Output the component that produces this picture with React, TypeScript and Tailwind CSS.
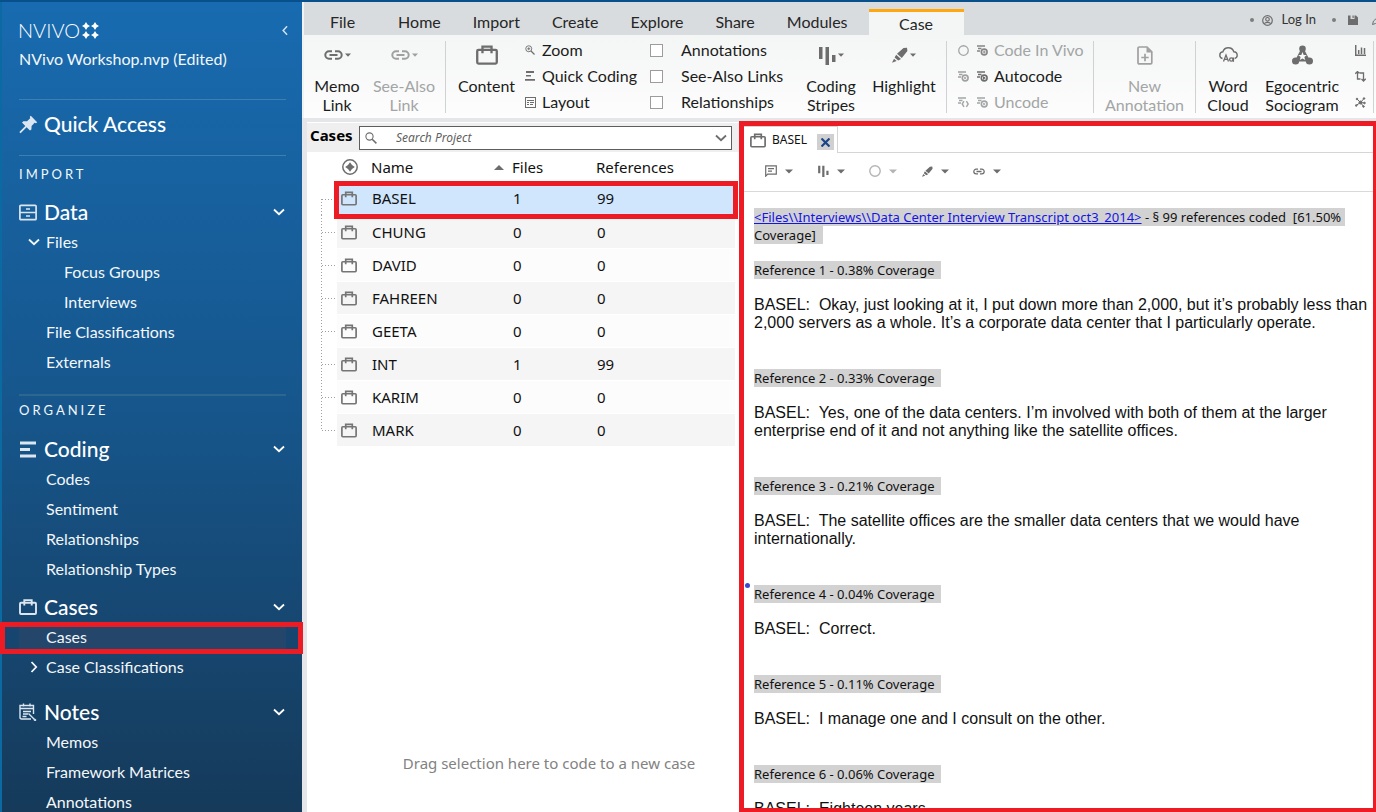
import React from "react";

type IconProps = { className?: string };

const Chevron = ({ className = "" }: IconProps) => (
  <svg width="12" height="8" viewBox="0 0 12 8" fill="none" stroke="currentColor" strokeWidth="1.8" className={className}>
    <path d="M1 1.5 6 6.2 11 1.5" />
  </svg>
);

const Caret = ({ className = "" }: IconProps) => (
  <svg width="8" height="5" viewBox="0 0 8 5" fill="currentColor" className={className}>
    <path d="M0 0.5h8L4 4.5z" />
  </svg>
);

const SmallCaret = () => (
  <svg width="6" height="4" viewBox="0 0 6 4" fill="currentColor">
    <path d="M0 0.5h6L3 3.7z" />
  </svg>
);

const Sparkles = () => (
  <svg width="17" height="17" viewBox="0 0 17 17" fill="currentColor">
    {[
      [4, 4],
      [13, 4],
      [4, 13],
      [13, 13],
    ].map(([x, y]) => (
      <path
        key={`${x}-${y}`}
        transform={`translate(${x} ${y})`}
        d="M0-4 1.5-1.5 4 0 1.5 1.5 0 4-1.5 1.5-4 0-1.5-1.5z"
      />
    ))}
  </svg>
);

const Pin = () => (
  <svg width="19" height="19" viewBox="0 0 19 19" fill="currentColor">
    <path d="M11.8 0.8 18.2 7.2 17 8.2 15.6 7.7 12.6 10.9 12.4 14.4 11 15.6 7.6 12.2 1.6 18.2 0.6 17.6 0.6 16.8 6.3 10.9 3 7.6 4.4 6.3 8 6.2 11.2 3.2 10.8 1.8z" />
  </svg>
);

const Drawers = () => (
  <svg width="18" height="17" viewBox="0 0 18 17" fill="none" stroke="currentColor" strokeWidth="1.7">
    <rect x="0.9" y="1.3" width="16.2" height="14.4" rx="1" />
    <path d="M1 8.5h16M7 5h4M7 12h4" />
  </svg>
);

const Lines = () => (
  <svg width="18" height="17" viewBox="0 0 18 17" fill="currentColor">
    <path d="M1 0.5h16v3H1zM1 7h10v3H1zM1 13.5h16v3H1z" />
  </svg>
);

const Briefcase = ({ className = "h-4 w-[18px]" }: IconProps) => (
  <svg viewBox="0 0 18 16" fill="none" stroke="currentColor" strokeWidth="1.9" className={className}>
    <rect x="1" y="3.8" width="16" height="11.2" rx="1" />
    <path d="M5.3 6.6V1.1h7.400v5.500" />
  </svg>
);

const NoteIcon = () => (
  <svg width="18" height="18" viewBox="0 0 18 18" fill="none" stroke="currentColor" strokeWidth="1.4">
    <path d="M12 16H2.5c-1 0-1.5-.6-1.5-1.5V2.5h13.500V11M1 5.500h13.500M4.500 0.500v3M11 0.500v3M4 8.500h8M4 11h5M3.500 13.500h4M9.500 10.500l6 6" />
    <path d="M15.200 16.200l1.600 1.600" strokeWidth="2" />
  </svg>
);

const LinkIcon = ({ className = "h-[10px] w-[19px]" }: IconProps) => (
  <svg viewBox="0 0 19 10" fill="none" stroke="currentColor" strokeWidth="2" className={className}>
    <path d="M8 1.300H5a3.700 3.700 0 0 0 0 7.400h3M11 1.300h3a3.700 3.700 0 0 1 0 7.400h-3M5.500 5h8" />
  </svg>
);

const Stripes = ({ className = "h-[19px] w-[17px]" }: IconProps) => (
  <svg viewBox="0 0 17 19" fill="currentColor" className={className}>
    <path d="M0 1h3.500v12H0zM6.500 1H10v18H6.500zM13 9h3.500v7H13z" />
  </svg>
);

const Marker = ({ className = "h-4 w-4" }: IconProps) => (
  <svg viewBox="0 0 16 16" fill="currentColor" className={className}>
    <path d="M11.500 1 15 0.800 15.400 4 9.800 11 5 6.800zM4.200 7.700 9 11.900 6.200 13.500 2.600 10.500zM2 11.800 4.600 14 0 15.800z" />
  </svg>
);

const Magnifier = ({ plus = false, className = "h-3 w-3" }: IconProps & { plus?: boolean }) => (
  <svg viewBox="0 0 12 12" fill="none" stroke="currentColor" strokeWidth="1.1" className={className}>
    <circle cx="4.500" cy="4.500" r="3.600" />
    <path d="M7.200 7.200 11.400 11.400" strokeWidth="1.500" />
    {plus && <path d="M2.700 4.500h3.600M4.500 2.700v3.600" />}
  </svg>
);

const QuickLines = () => (
  <svg width="10" height="10" viewBox="0 0 10 10" fill="currentColor">
    <path d="M1 0h8v2H1zM1 4h5v1.600H1zM0 8h10v1.800H0z" />
  </svg>
);

const LayoutIcon = () => (
  <svg width="11" height="11" viewBox="0 0 11 11" fill="none" stroke="currentColor" strokeWidth="1">
    <rect x="0.500" y="0.500" width="10" height="10" />
    <path d="M2 3.500h7M2 5.500h2M5 5.500h4M2 7.500h2M5 7.500h3" strokeWidth="1" />
  </svg>
);

const CodeBadge = ({ kind }: { kind: "plus" | "play" | "x" | "diamond" }) => (
  <svg width="11" height="11" viewBox="0 0 11 11" fill="none" stroke="currentColor" strokeWidth="1.400">
    <path d="M0 1h8M1 3.500h3.500M0 6h3" />
    {kind === "diamond" ? (
      <path d="M6 4.200 4.200 7 6 9.800M8.400 4.200 10.200 7 8.400 9.800" />
    ) : (
      <circle cx="7.200" cy="7" r="2.900" strokeWidth="1.600" />
    )}
    {kind === "plus" && <path d="M7.200 5.500v3M5.700 7h3" strokeWidth="0.900" />}
    {kind === "play" && <path d="M6.500 5.800v2.600l1.800-1.300z" strokeWidth="1" />}
    {kind === "x" && <path d="M6 5.900l2.300 2.300M8.300 5.900 6 8.200" strokeWidth="0.900" />}
  </svg>
);

const Ring = ({ className = "h-[11px] w-[11px]" }: IconProps) => (
  <svg viewBox="0 0 12 12" fill="none" stroke="currentColor" strokeWidth="1.400" className={className}>
    <circle cx="6" cy="6" r="5.200" />
  </svg>
);

const NewNote = () => (
  <svg width="16" height="19" viewBox="0 0 16 19" fill="none" stroke="currentColor" strokeWidth="1.700">
    <path d="M1 2.200C1 1.500 1.500 1 2.200 1H10l4.800 4.800v10.900c0 .7-.5 1.200-1.200 1.200H2.200c-.7 0-1.200-.5-1.200-1.200zM4.300 11.500h7.400M8 7.800v7.400" />
    <path d="M9.500 1v5.500h5.300z" fill="currentColor" stroke="none" />
  </svg>
);

const WordCloud = () => (
  <svg width="19" height="16" viewBox="0 0 19 16" fill="none" stroke="currentColor" strokeWidth="1.400">
    <path d="M3.500 11.500C1.700 11 .8 9.700.8 8.200c0-1.800 1.300-3.200 3.100-3.400C4.700 2.300 6.800.8 9.300.8s4.700 1.500 5.500 4c2 .1 3.400 1.600 3.400 3.500 0 1.500-1 2.800-2.600 3.200" />
    <path d="M4.500 14.500 7 8l2.500 6.500M5.500 12.300h3" strokeWidth="1.300" />
    <circle cx="12.300" cy="12.500" r="1.700" strokeWidth="1.300" />
    <path d="M14.400 10.500v4.300" strokeWidth="1.300" />
  </svg>
);

const Sociogram = () => (
  <svg width="21" height="20" viewBox="0 0 21 20" fill="currentColor">
    <circle cx="10.500" cy="3.700" r="3.300" />
    <circle cx="3.600" cy="16" r="3.600" />
    <circle cx="17.400" cy="16" r="3.600" />
    <path d="M10.500 4.500 5 15h11z" stroke="currentColor" strokeWidth="3" />
    <path d="M10.500 7l1.200 2.900 3.100.2-2.400 2 .8 3-2.700-1.600-2.700 1.600.8-3-2.400-2 3.100-.2z" fill="#f8f9f9" />
  </svg>
);

const ChartIcon = () => (
  <svg width="11" height="11" viewBox="0 0 11 11" fill="none" stroke="currentColor" strokeWidth="1.500">
    <path d="M0.700 0v10.200H11M3.700 9V5M6.500 9V2.500M9.500 9V3" />
  </svg>
);

const CompareIcon = () => (
  <svg width="11" height="11" viewBox="0 0 11 11" fill="none" stroke="currentColor" strokeWidth="1.300">
    <path d="M2.500 0.500v7.500h3M4.500 2h4v8M0.300 2.700 2.500 0.500 4.200 2.200M6.500 8 8.500 10 10.700 7.800" />
  </svg>
);

const NetworkIcon = () => (
  <svg width="11" height="11" viewBox="0 0 11 11" fill="currentColor" stroke="currentColor" strokeWidth="1">
    <path d="M2 2 5.500 5.500 9 1.500M5.500 5.500 1 8.500M5.500 5.500l4 .5M5.500 5.500 8.500 9.500" fill="none" />
    <circle cx="5.500" cy="5.500" r="1.500" />
    <circle cx="2" cy="2" r=".8" />
    <circle cx="9" cy="1.500" r=".8" />
    <circle cx="1.200" cy="8.500" r=".8" />
    <circle cx="9.500" cy="6" r=".8" />
    <circle cx="8.500" cy="9.500" r=".8" />
  </svg>
);

const Comment = () => (
  <svg width="12" height="12" viewBox="0 0 12 12" fill="none" stroke="currentColor" strokeWidth="1.200">
    <path d="M0.700 11.200V0.800h10.600v8.400H2.700zM3 3.700h6M3 6.200h4" />
  </svg>
);

const UserIcon = () => (
  <svg width="11" height="11" viewBox="0 0 11 11" fill="none" stroke="currentColor" strokeWidth="1.200">
    <circle cx="5.500" cy="5.500" r="4.800" />
    <circle cx="5.500" cy="4.300" r="1.800" />
    <path d="M2.300 8.800c1-2 5.400-2 6.400 0" />
  </svg>
);

const SaveIcon = () => (
  <svg width="10" height="10" viewBox="0 0 10 10" fill="currentColor">
    <path d="M0 0.500h2.500V4h4V0.500h1.500L10 2.500V10H0zM4.500 0.500h1.200V3H4.500z" />
  </svg>
);

const PencilIcon = () => (
  <svg width="10" height="10" viewBox="0 0 10 10" fill="none" stroke="currentColor" strokeWidth="1">
    <path d="M0.500 9.500 1.500 6 7.500 0.700 9.500 2.700 3.500 8.500z" />
  </svg>
);

const AddIcon = () => (
  <svg width="16" height="16" viewBox="0 0 16 16" fill="none" stroke="currentColor" strokeWidth="1.500">
    <circle cx="8" cy="8" r="7.200" />
    <path d="M8 3.200 10 6 12.800 8 10 10 8 12.800 6 10 3.200 8 6 6z" fill="currentColor" stroke="none" />
  </svg>
);

function NavHeader({ icon, label, open = true }: { icon: React.ReactNode; label: string; open?: boolean }) {
  return (
    <button className="flex h-[30px] w-full items-center text-left text-[21px] font-medium text-white">
      <span className="flex w-[25px] items-center text-[#dbe6f0]">{icon}</span>
      <span className="flex-1">{label}</span>
      {open && <Chevron className="mr-px" />}
    </button>
  );
}

function NavItem({
  label,
  nested = false,
  expander,
  selected = false,
}: {
  label: string;
  nested?: boolean;
  expander?: "open" | "closed";
  selected?: boolean;
}) {
  return (
    <a
      href="#"
      className={`relative flex h-[30px] items-center text-[16px] leading-4 text-[#f3f7fa] ${selected ? "bg-[#24466a]" : ""}`}
    >
      <span className={`flex justify-end pr-[6px] ${nested ? "w-[45px]" : "w-[27px]"}`}>
        {expander && <Chevron className={expander === "closed" ? "-rotate-90" : ""} />}
      </span>
      {label}
      {selected && <span className="absolute top-0 -right-[17px] -bottom-[2px] -left-[19px] border-[5px] border-[#ed1c24]" />}
    </a>
  );
}

function Sidebar() {
  return (
    <nav className="relative z-10 w-[302px] shrink-0 border-l-2 border-[#0b6aa2] bg-linear-to-b from-[#186bb0] via-[#16568c] to-[#153a5a] pr-4 pl-[17px] font-[Lato,sans-serif]">
      <div className="flex h-14 items-center justify-between">
        <div className="-ml-px flex items-center gap-[2px] text-[20px] font-light text-white">
          <span>NVIVO</span>
          <Sparkles />
        </div>
        <button aria-label="Collapse navigation" className="mr-[-4px] text-white/80">
          <Chevron className="h-[7px] w-[10px] rotate-90" />
        </button>
      </div>
      <div className="-mt-[9px] h-[50px] text-[16px] leading-5 text-[#f3f7fa]">NVivo Workshop.nvp (Edited)</div>
      <div className="flex h-[57px] items-center border-y border-[#3e7fb3] pb-[7px]">
        <NavHeader icon={<Pin />} label="Quick Access" open={false} />
      </div>
      <h2 className="mb-[3px] flex h-[38px] items-center text-[13px] tracking-[3px] text-[#f3f7fa]">IMPORT</h2>
      <NavHeader icon={<Drawers />} label="Data" />
      <NavItem label="Files" expander="open" />
      <NavItem label="Focus Groups" nested />
      <NavItem label="Interviews" nested />
      <NavItem label="File Classifications" />
      <NavItem label="Externals" />
      <h2 className="mt-[17px] mb-2 flex h-8 items-center border-t-2 border-[#2d668f] text-[13px] tracking-[3px] text-[#f3f7fa]">
        ORGANIZE
      </h2>
      <NavHeader icon={<Lines />} label="Coding" />
      <NavItem label="Codes" />
      <NavItem label="Sentiment" />
      <NavItem label="Relationships" />
      <NavItem label="Relationship Types" />
      <div className="mt-2">
        <NavHeader icon={<Briefcase />} label="Cases" />
        <NavItem label="Cases" selected />
        <NavItem label="Case Classifications" expander="closed" />
      </div>
      <div className="mt-[15px]">
        <NavHeader icon={<NoteIcon />} label="Notes" />
        <NavItem label="Memos" />
        <NavItem label="Framework Matrices" />
        <NavItem label="Annotations" />
      </div>
    </nav>
  );
}

function BigButton({
  icon,
  lines,
  width,
  caret = false,
  muted = false,
}: {
  icon: React.ReactNode;
  lines: string[];
  width: string;
  caret?: boolean;
  muted?: boolean;
}) {
  return (
    <button
      disabled={muted}
      className={`flex shrink-0 flex-col items-center pt-2 text-[16px] leading-[19px] ${width} ${muted ? "text-[#a3a5a6]" : "text-[#1c1c1c]"}`}
    >
      <span className={`mb-[9px] flex h-6 items-center gap-[2px] ${muted ? "text-[#a0a0a0]" : "text-[#6d6d6d]"}`}>
        {icon}
        {caret && <SmallCaret />}
      </span>
      {lines.map((l) => (
        <span key={l} className="whitespace-nowrap">
          {l}
        </span>
      ))}
    </button>
  );
}

const Divider = () => <span className="mt-[6px] h-[72px] w-px shrink-0 bg-[#cfd1d2]" />;

function Ribbon() {
  return (
    <header className="shrink-0 border-l-2 border-[#f0f2f3] font-[Lato,sans-serif]">
      <div className="flex h-[33px] items-end bg-[#d9dcdf] pl-[10px] text-[16px] text-[#262626]">
        <button className="mr-[11px] h-[26px] px-4">File</button>
        {["Home", "Import", "Create", "Explore", "Share", "Modules"].map((t) => (
          <button key={t} className="h-[26px] px-4">
            {t}
          </button>
        ))}
        <button className="ml-[5px] h-[26px] w-[95px] border-t-3 border-[#ffa70f] bg-[#f4f6f5] pb-[3px]">Case</button>
        <div className="-mr-[6px] ml-auto flex h-[30px] items-center text-[13px] text-[#6d6d6d]">
          <span className="mr-2 h-1 w-1 rounded-full bg-[#7d7d7d]" />
          <button className="flex items-center gap-[9px]">
            <UserIcon />
            <span className="text-[#333]">Log In</span>
          </button>
          <span className="mr-3 ml-4 h-1 w-1 rounded-full bg-[#7d7d7d]" />
          <button aria-label="Save" className="mr-[14px]">
            <SaveIcon />
          </button>
          <button aria-label="Edit">
            <PencilIcon />
          </button>
        </div>
      </div>
      <div className="flex h-[83px] overflow-hidden bg-linear-to-b from-[#f4f6f5] to-[#fcfdfc] pl-[2px]">
        <BigButton icon={<LinkIcon />} lines={["Memo", "Link"]} width="w-[62px]" caret />
        <BigButton icon={<LinkIcon />} lines={["See-Also", "Link"]} width="w-[72px]" caret muted />
        <span className="w-[5px]" />
        <Divider />
        <BigButton icon={<Briefcase className="h-[20px] w-[22px]" />} lines={["Content"]} width="w-[81px]" />
        <div className="-ml-[2px] w-[125px] shrink-0 pt-[2px] text-[16px] text-[#1c1c1c]">
          {[
            ["Zoom", <Magnifier plus className="h-[10px] w-[10px]" />],
            ["Quick Coding", <QuickLines />],
            ["Layout", <LayoutIcon />],
          ].map(([label, icon]) => (
            <button key={label as string} className="flex h-[26px] items-center whitespace-nowrap">
              <span className="flex w-[17px] text-[#6d6d6d]">{icon}</span>
              {label}
            </button>
          ))}
        </div>
        <div className="w-[145px] shrink-0 pt-[2px] text-[16px] text-[#1c1c1c]">
          {["Annotations", "See-Also Links", "Relationships"].map((label) => (
            <label key={label} className="flex h-[26px] items-center gap-[18px] whitespace-nowrap">
              <input type="checkbox" className="h-[13px] w-[13px] shrink-0 appearance-none border border-[#9c9c9c] bg-white" />
              {label}
            </label>
          ))}
        </div>
        <BigButton icon={<Stripes />} lines={["Coding", "Stripes"]} width="w-[72px]" caret />
        <BigButton icon={<Marker />} lines={["Highlight"]} width="w-[74px]" caret />
        <span className="w-[5px]" />
        <Divider />
        <div className="w-[146px] shrink-0 pt-[2px] pl-[11px] text-[16px]">
          <div className="flex h-[26px] items-center text-[#a3a5a6]">
            <span className="flex w-[19px]"><Ring /></span>
            <button className="flex items-center gap-[6px] whitespace-nowrap">
              <span className="text-[#858585]"><CodeBadge kind="plus" /></span>
              Code In Vivo
            </button>
          </div>
          <div className="flex h-[26px] items-center text-[#1c1c1c]">
            <span className="flex w-[19px] text-[#a0a0a0]"><CodeBadge kind="x" /></span>
            <button className="flex items-center gap-[6px]">
              <span className="text-[#6d6d6d]"><CodeBadge kind="play" /></span>
              Autocode
            </button>
          </div>
          <div className="flex h-[26px] items-center text-[#a3a5a6]">
            <span className="flex w-[19px]"><CodeBadge kind="diamond" /></span>
            <button className="flex items-center gap-[6px]">
              <CodeBadge kind="x" />
              Uncode
            </button>
          </div>
        </div>
        <Divider />
        <BigButton icon={<NewNote />} lines={["New", "Annotation"]} width="w-[101px]" muted />
        <Divider />
        <BigButton icon={<WordCloud />} lines={["Word", "Cloud"]} width="w-[64px]" />
        <BigButton icon={<Sociogram />} lines={["Egocentric", "Sociogram"]} width="w-[84px]" />
        <div className="flex w-[29px] shrink-0 flex-col items-center pt-[2px] pl-[3px] text-[#6d6d6d]">
          <button aria-label="Chart" className="h-[26px]"><ChartIcon /></button>
          <button aria-label="Compare" className="h-[26px]"><CompareIcon /></button>
          <button aria-label="Explore network" className="h-[26px]"><NetworkIcon /></button>
        </div>
        <Divider />
      </div>
    </header>
  );
}

const cases: [string, number, number][] = [
  ["BASEL", 1, 99],
  ["CHUNG", 0, 0],
  ["DAVID", 0, 0],
  ["FAHREEN", 0, 0],
  ["GEETA", 0, 0],
  ["INT", 1, 99],
  ["KARIM", 0, 0],
  ["MARK", 0, 0],
];

function CaseList() {
  return (
    <section className="flex w-[432px] shrink-0 flex-col bg-white pt-px font-['Noto_Sans',sans-serif]">
      <div className="flex h-[29px] items-center bg-[#efefef] pr-[7px] pl-[3px]">
        <h1 className="w-[49px] pb-1 text-[15px] font-bold text-black">Cases</h1>
        <div className="flex h-6 flex-1 items-center border border-[#5d5d5d] bg-white pr-1 pl-[5px] text-[#6d6d6d]">
          <Magnifier />
          <input
            aria-label="Search Project"
            placeholder="Search Project"
            className="min-w-0 flex-1 pl-[19px] text-[12px] italic outline-none placeholder:text-[#5f5f5f]"
          />
          <Chevron />
        </div>
      </div>
      <table className="w-full table-fixed border-separate border-spacing-0 text-left text-[15px] text-[#111]">
        <colgroup>
          <col className="w-[30px]" />
          <col className="w-[34px]" />
          <col className="w-[141px]" />
          <col className="w-[84px]" />
          <col />
          <col className="w-[4px]" />
        </colgroup>
        <thead>
          <tr className="h-[30px]">
            <td />
            <td className="pl-[5px] text-[#6d6d6d]">
              <AddIcon />
            </td>
            <th className="font-normal">
              <span className="flex items-center justify-between pr-2">
                Name
                <svg width="10" height="5" viewBox="0 0 10 5" fill="#6d6d6d">
                  <path d="M0 5h10L5 0z" />
                </svg>
              </span>
            </th>
            <th className="font-normal">Files</th>
            <th className="font-normal">References</th>
            <td />
          </tr>
        </thead>
        <tbody>
          {cases.map(([name, files, refs], i) => {
            const bg =
              i === 0 ? "bg-[#cfe6fd]" : i % 2 === 1 ? "border-t border-white bg-[#f5f5f5]" : "border-t border-white bg-[#fcfcfc]";
            return (
              <tr key={name} className="h-[33px]">
                <td className="p-0">
                  <svg width="30" height="33" viewBox="0 0 30 33" className="block" stroke="#a0a0a0" strokeDasharray="1 2" fill="none">
                    <path d={i === 0 ? "M14.500 17v16" : i === cases.length - 1 ? "M14.500 0v17" : "M14.500 0v33"} />
                    <path d="M15 17.500h13" />
                  </svg>
                </td>
                <td className={`pl-1 text-[#757575] ${bg}`}>
                  <Briefcase className="h-[15px] w-4" />
                </td>
                <td className={`relative pl-px ${bg}`}>
                  {name}
                  {i === 0 && (
                    <span className="pointer-events-none absolute -top-px -left-[37px] z-10 h-[38px] w-[404px] border-[5px] border-[#ed1c24]" />
                  )}
                </td>
                <td className={`pl-px ${bg}`}>{files}</td>
                <td className={`pl-px ${bg}`}>{refs}</td>
                <td />
              </tr>
            );
          })}
        </tbody>
      </table>
      <p className="mt-auto pb-[39px] pl-[52px] text-center text-[15px] leading-5 text-[#828282]">
        Drag selection here to code to a new case
      </p>
    </section>
  );
}

const references: [string, string][] = [
  [
    "0.38%",
    "Okay, just looking at it, I put down more than 2,000, but it’s probably less than 2,000 servers as a whole. It’s a corporate data center that I particularly operate.",
  ],
  [
    "0.33%",
    "Yes, one of the data centers. I’m involved with both of them at the larger enterprise end of it and not anything like the satellite offices.",
  ],
  ["0.21%", "The satellite offices are the smaller data centers that we would have internationally."],
  ["0.04%", "Correct."],
  ["0.11%", "I manage one and I consult on the other."],
  ["0.06%", "Eighteen years."],
];

function Detail() {
  return (
    <section className="relative flex min-w-0 flex-1 flex-col overflow-hidden border-t-[5px] border-r-[3px] border-b-[4px] border-l-[5px] border-[#ed1c24] bg-white">
      <div className="flex h-[27px] shrink-0 font-['Noto_Sans',sans-serif]">
        <div className="flex w-[94px] items-center border-t border-r border-[#d5d5d5] pl-[6px] text-[12px] text-[#111]">
          <span className="text-[#6d6d6d]">
            <Briefcase className="h-[15px] w-4" />
          </span>
          <span className="ml-[6px] w-[45px]">BASEL</span>
          <button aria-label="Close tab" className="mt-1 flex h-4 w-[17px] items-center justify-center bg-[#d0d0d0] text-[#1c4587]">
            <svg width="9" height="9" viewBox="0 0 9 9" stroke="currentColor" strokeWidth="2.200">
              <path d="M0.500 0.500 8.500 8.500M8.500 0.500 0.500 8.500" />
            </svg>
          </button>
        </div>
        <div className="flex-1 border-b border-[#d5d5d5]" />
      </div>
      <div className="flex h-[39px] shrink-0 items-center gap-5 border-b border-[#d9d9d9] pb-[2px] pl-[21px] text-[#6d6d6d]">
        <button aria-label="Comments" className="flex w-7 items-center justify-between"><Comment /><Caret /></button>
        <button aria-label="Coding stripes" className="ml-[5px] flex w-[27px] items-center justify-between"><Stripes className="h-3 w-[11px]" /><Caret /></button>
        <button aria-label="Code" className="ml-1 flex w-7 items-center justify-between text-[#b4b4b4]"><Ring className="h-3 w-3" /><Caret /></button>
        <button aria-label="Highlight" className="ml-[5px] flex w-[27px] items-center justify-between"><Marker className="h-[11px] w-[11px]" /><Caret /></button>
        <button aria-label="Links" className="ml-1 flex w-7 items-center justify-between"><LinkIcon className="h-[7px] w-3" /><Caret /></button>
      </div>
      <article className="min-h-0 flex-1 overflow-hidden pt-4 pl-[10px] font-['Liberation_Sans',sans-serif] text-[16px] leading-[18px] text-[#111]">
        <p className="font-['Noto_Sans',sans-serif] text-[13px]">
          <span className="bg-[#d2d2d2] whitespace-pre-wrap">
            <a href="#" className="text-[#1414e6] underline">
              {"<Files\\\\Interviews\\\\Data Center Interview Transcript oct3_2014>"}
            </a>
            {" - § 99 references coded  [61.50% Coverage]  "}
          </span>
        </p>
        {references.map(([coverage, text], i) => (
          <div key={coverage} className={i === 0 ? "mt-[17px]" : "mt-[37px]"}>
            <h3 className="font-['Noto_Sans',sans-serif] text-[13px]">
              <span className="bg-[#d2d2d2] whitespace-pre">{`Reference ${i + 1} - ${coverage} Coverage  `}</span>
            </h3>
            <p className="mt-[17px] whitespace-pre-wrap">{`BASEL:  ${text}`}</p>
          </div>
        ))}
      </article>
      <span className="absolute top-[457px] left-px h-[5px] w-[5px] rounded-full bg-[#3f48cc]" />
    </section>
  );
}

export default function App() {
  return (
    <div className="flex h-screen overflow-hidden border-t-2 border-[#08508c] bg-[#e4e6e9]">
      <Sidebar />
      <div className="relative flex min-w-0 flex-1 flex-col">
        <Ribbon />
        <main className="flex min-h-0 flex-1 pt-1 pl-[5px]">
          <CaseList />
          <div className="-mt-px flex min-w-0 flex-1">
            <Detail />
          </div>
        </main>
      </div>
    </div>
  );
}
